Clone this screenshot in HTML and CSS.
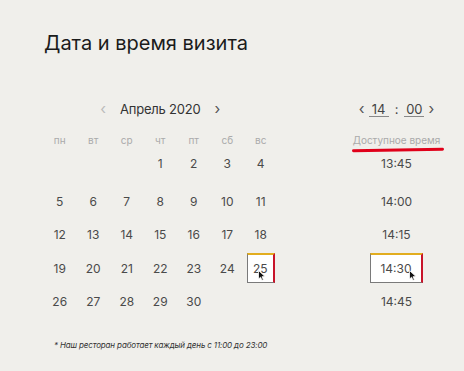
FILE: index.html
```html
<!DOCTYPE html>
<html lang="ru">
<head>
  <meta charset="UTF-8">
  <title>Дата и время визита</title>
  <link rel="stylesheet" href="styles.css">
</head>
<body>
  <div class="page">
    <h1>Дата и время визита</h1>
    <div class="booking">
      <!-- ===== Calendar ===== -->
      <div class="calendar">
        <div class="cal-nav">
          <span class="arrow disabled">‹</span>
          <span class="month">Апрель 2020</span>
          <span class="arrow">›</span>
        </div>
        <div class="weekdays">
          <span>пн</span><span>вт</span><span>ср</span><span>чт</span><span>пт</span><span>сб</span><span>вс</span>
        </div>
        <div class="days">
          <span></span><span></span><span></span>
          <span>1</span><span>2</span><span>3</span><span>4</span>
          <span>5</span><span>6</span><span>7</span><span>8</span><span>9</span><span>10</span><span>11</span>
          <span>12</span><span>13</span><span>14</span><span>15</span><span>16</span><span>17</span><span>18</span>
          <span>19</span><span>20</span><span>21</span><span>22</span><span>23</span><span>24</span>
          <span class="picked">25
            <svg class="cursor" width="8" height="11" viewBox="0 0 8 11"><path d="M0.5 0.5 L0.5 9 L2.6 7.2 L4 10.3 L5.4 9.7 L4 6.7 L7 6.6 Z" fill="#111" stroke="#fff" stroke-width="0.8"/></svg>
          </span>
          <span>26</span><span>27</span><span>28</span><span>29</span><span>30</span>
        </div>
        <p class="note">* Наш ресторан работает каждый день с 11:00 до 23:00</p>
      </div>

      <!-- ===== Time ===== -->
      <div class="times">
        <div class="time-nav">
          <span class="arrow">‹</span>
          <span class="field">14</span>
          <span class="colon">:</span>
          <span class="field">00</span>
          <span class="arrow">›</span>
        </div>
        <div class="time-label">
          Доступное время
          <svg class="mark" width="92" height="6" viewBox="0 0 92 6"><path d="M1.5 3.8 C30 3.5 60 2.9 90.5 2.2" stroke="#e0001a" stroke-width="3" stroke-linecap="round" fill="none"/></svg>
        </div>
        <div class="slots">
          <span>13:45</span>
          <span>14:00</span>
          <span>14:15</span>
          <span class="picked wide">14:30
            <svg class="cursor" width="8" height="11" viewBox="0 0 8 11"><path d="M0.5 0.5 L0.5 9 L2.6 7.2 L4 10.3 L5.4 9.7 L4 6.7 L7 6.6 Z" fill="#111" stroke="#fff" stroke-width="0.8"/></svg>
          </span>
          <span>14:45</span>
        </div>
      </div>
    </div>
  </div>
</body>
</html>
```

FILE: styles.css
```css
body {
  margin: 0;
  background-color: #f0efeb;
  font-family: 'Inter', 'Noto Sans', sans-serif;
  color: #4a4a4a;
}
.page {
  padding: 31px 0 0 44px;
}
h1 {
  margin: 0;
  font-size: 20px;
  font-weight: 400;
  line-height: 24px;
  color: #1b1b1b;
}
.booking {
  display: flex;
  margin-top: 42px;
  margin-left: -1px;
}
.calendar {
  width: 234.5px;
}
.cal-nav,
.time-nav {
  height: 24px;
  display: flex;
  align-items: center;
  justify-content: center;
}
.cal-nav {
  gap: 14px;
}
.month {
  font-size: 13px;
  color: #333;
  letter-spacing: -0.2px;
}
.arrow {
  font-size: 15px;
  color: #555;
  line-height: 1;
  padding-bottom: 2px;
}
.arrow.disabled {
  color: #bbb;
}
.weekdays {
  display: grid;
  grid-template-columns: repeat(7, 1fr);
  height: 20px;
  margin-top: 9px;
  margin-bottom: -2px;
  align-items: center;
  text-align: center;
  font-size: 10px;
  color: #aaa;
}
.days {
  display: grid;
  grid-template-columns: repeat(7, 1fr);
  grid-template-rows: 34.5px repeat(4, 30px);
  row-gap: 3.5px;
  font-size: 12px;
}
.days span,
.slots span {
  height: 30px;
  display: flex;
  align-items: center;
  justify-content: center;
  align-self: start;
}
.days span.picked {
  width: 28px;
  justify-self: center;
}
.picked {
  position: relative;
  box-sizing: border-box;
  background-color: #fff;
  border-left: 1px solid #7a7a7a;
  border-bottom: 1px solid #7a7a7a;
  border-top: 2px solid #e2ad1f;
  border-right: 2px solid #c8142a;
}
.cursor {
  position: absolute;
  right: 7px;
  bottom: 1px;
}
.wide .cursor {
  right: 4px;
}
.note {
  margin: 23px 0 0 11px;
  font-size: 8px;
  font-style: italic;
  color: #333;
  white-space: nowrap;
  letter-spacing: -0.15px;
}
.times {
  width: 100px;
  margin-left: 69px;
}
.time-nav {
  gap: 4px;
  font-size: 13px;
  color: #444;
}
.field {
  width: 20px;
  text-align: center;
  border-bottom: 1px solid #888;
  line-height: 14px;
}
.colon {
  padding: 0 2px;
}
.time-label {
  position: relative;
  height: 20px;
  margin-top: 9px;
  margin-bottom: -2px;
  display: flex;
  align-items: center;
  justify-content: center;
  font-size: 10px;
  color: #aaa;
  white-space: nowrap;
}
.mark {
  position: absolute;
  left: 5px;
  bottom: -3px;
}
.slots {
  display: grid;
  grid-template-rows: 34.5px repeat(4, 30px);
  row-gap: 3.5px;
  font-size: 12px;
}
.slots span.picked {
  width: 53px;
  justify-self: center;
}
```
